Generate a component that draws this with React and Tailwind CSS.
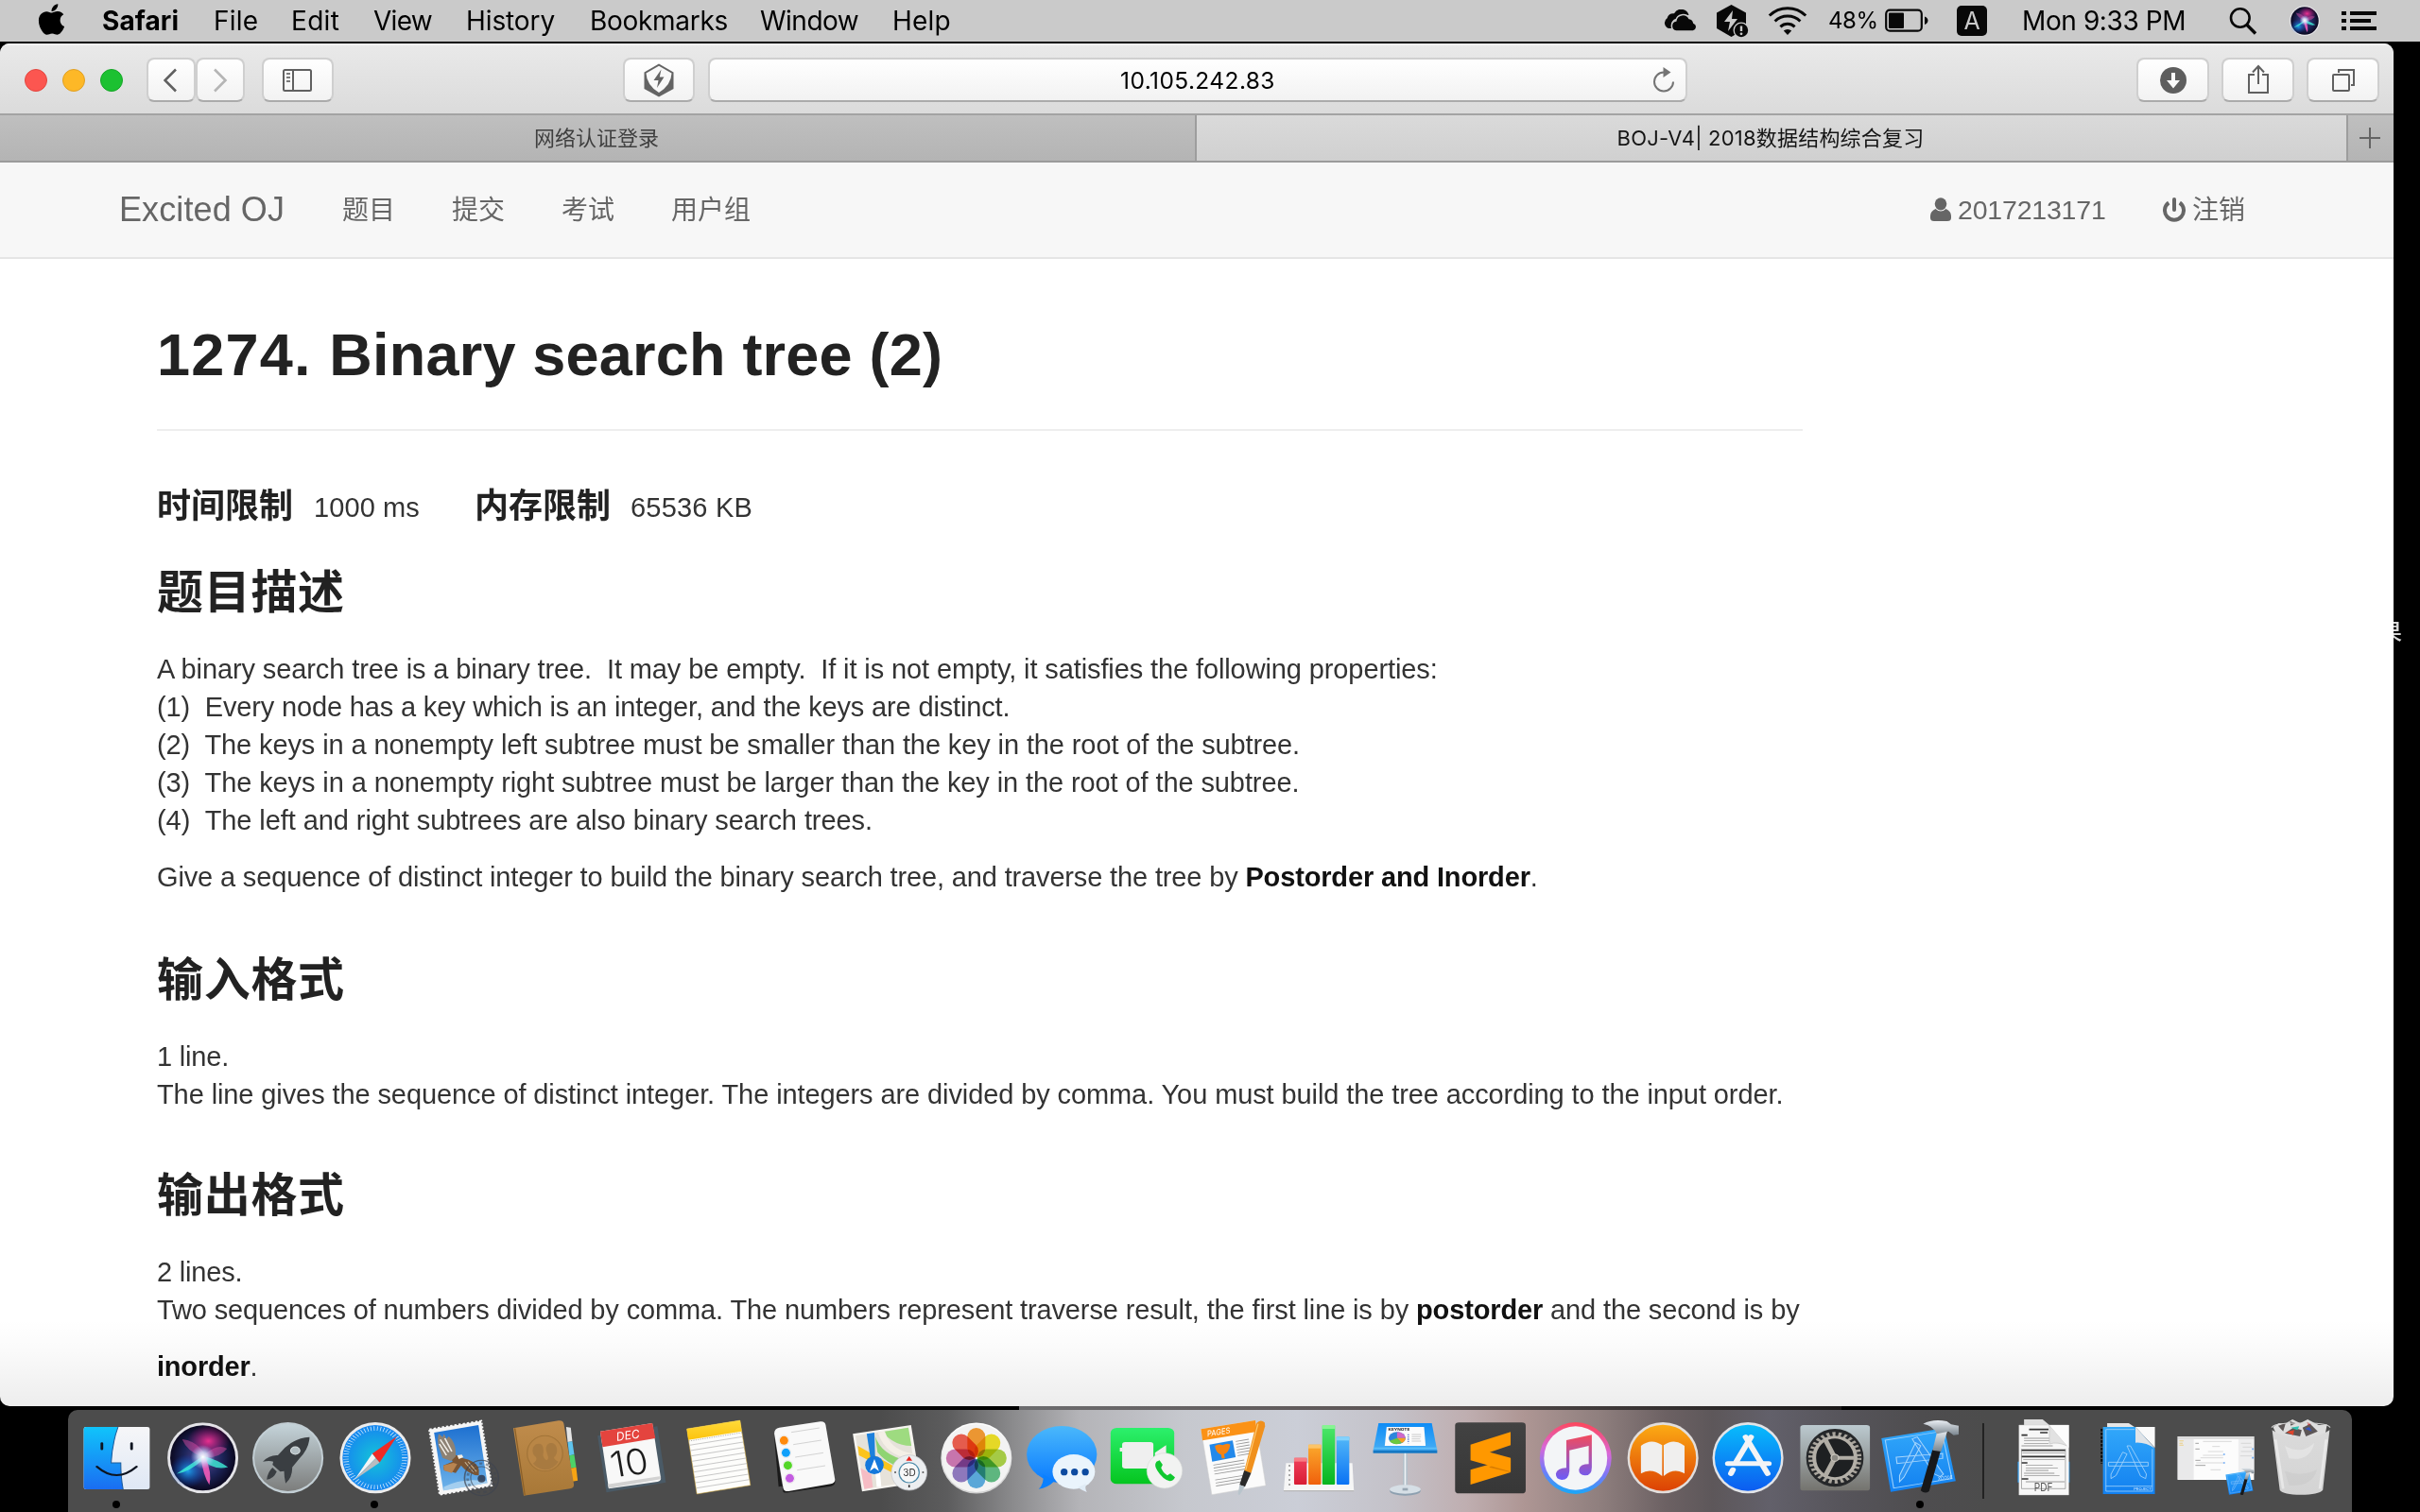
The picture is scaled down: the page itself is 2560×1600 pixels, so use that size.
import React from "react";
import { FaApple } from "react-icons/fa";

const UI = "font-['Inter','Noto_Sans_CJK_SC',sans-serif]";
const PAGE = "font-['Liberation_Sans','Noto_Sans_CJK_SC',sans-serif]";

/* ---------- menu bar ---------- */

const menus = [
  { label: "Safari", cls: "w-[118px] font-bold tracking-[0.1px]" },
  { label: "File", cls: "w-[82px] tracking-[0.2px]" },
  { label: "Edit", cls: "w-[87px] tracking-[0.3px]" },
  { label: "View", cls: "w-[98px] tracking-[-0.7px]" },
  { label: "History", cls: "w-[131px] tracking-[-0.1px]" },
  { label: "Bookmarks", cls: "w-[180px] tracking-[-0.3px]" },
  { label: "Window", cls: "w-[140px] tracking-[-0.5px]" },
  { label: "Help", cls: "w-[62px] tracking-[0.2px]" },
];

function SiriOrb({ id, className }) {
  return (
    <svg viewBox="0 0 76 76" className={className}>
      <defs>
        <radialGradient id={id + "bg"} cx="0.5" cy="0.5" r="0.5">
          <stop offset="0" stopColor="#5a4a9a" />
          <stop offset="0.6" stopColor="#1c2458" />
          <stop offset="1" stopColor="#0b0820" />
        </radialGradient>
        <radialGradient id={id + "pk"} cx="0.5" cy="0.5" r="0.5">
          <stop offset="0" stopColor="#e8308f" />
          <stop offset="1" stopColor="#b01070" stopOpacity="0" />
        </radialGradient>
        <radialGradient id={id + "bl"} cx="0.5" cy="0.5" r="0.5">
          <stop offset="0" stopColor="#1f9fe8" />
          <stop offset="1" stopColor="#0a40c0" stopOpacity="0" />
        </radialGradient>
        <radialGradient id={id + "wh"} cx="0.5" cy="0.5" r="0.5">
          <stop offset="0" stopColor="#fff" />
          <stop offset="0.4" stopColor="#d8e8ff" stopOpacity="0.8" />
          <stop offset="1" stopColor="#a0c0ff" stopOpacity="0" />
        </radialGradient>
      </defs>
      <circle cx="38" cy="38" r="38" fill="#e4e4e8" />
      <circle cx="38" cy="38" r="35" fill={"url(#" + id + "bg)"} />
      <ellipse cx="44" cy="20" rx="23" ry="17" fill={"url(#" + id + "pk)"} />
      <ellipse cx="22" cy="52" rx="20" ry="18" fill={"url(#" + id + "bl)"} />
      <path d="M37 37 Q20 30 16 18 Q32 20 40 34 Q54 22 64 28 Q56 38 40 38Z" fill="#e64fa8" opacity="0.45" />
      <path d="M38 36 Q26 44 10 55 Q24 53 38 40 Q50 52 65 48 Q54 40 38 36Z" fill="#3ff0d8" opacity="0.8" />
      <path d="M36 38 Q38 56 45 67 Q48 54 41 38Z" fill="#ff5fc0" opacity="0.85" />
      <circle cx="38" cy="37" r="13" fill={"url(#" + id + "wh)"} />
    </svg>
  );
}

function MenuBar() {
  return (
    <header className={"flex h-[44px] shrink-0 items-center bg-[#cacaca] text-[28px] leading-[44px] text-black " + UI}>
      <div className="flex w-[1760px] items-center">
        <FaApple className="ml-[36px] h-[37px] w-[37px] -translate-y-[2px]" />
        <nav className="ml-[35px] flex">
          {menus.map((m) => (
            <span key={m.label} className={m.cls}>{m.label}</span>
          ))}
        </nav>
      </div>
      <svg viewBox="0 0 36 24" className="h-[24px] w-[36px]">
        <path d="M8 20 H5.5 A6 6 0 0 1 3.6 9.2 A7 7 0 0 1 11 4.2 A8.4 8.4 0 0 1 26.5 6 Q18 4.5 14.5 9.6 Q9.5 10 8 15 Z" fill="#080808" />
        <path d="M13 23 A5.6 5.6 0 0 1 12.8 12 A7.6 7.6 0 0 1 27 9.6 A6 6 0 0 1 31.8 14.2 A4.6 4.6 0 0 1 31 23 Z" fill="#080808" stroke="#cacaca" strokeWidth="1.5" />
      </svg>
      <svg viewBox="0 0 35 36" className="ml-[19px] h-[36px] w-[35px]">
        <path d="M16.500 1 L32 9.500 V26 L16.500 35 L1 26 V9.500Z" fill="#080808" />
        <path d="M18 7 L9 19 H15 L13 29 L23 16 H17Z" fill="#cacaca" />
        <circle cx="27" cy="28" r="8.500" fill="#cacaca" />
        <circle cx="27" cy="28" r="7.200" fill="#080808" />
        <path d="M27 23.500 V29" stroke="#cacaca" strokeWidth="2.400" />
        <circle cx="27" cy="31.800" r="1.400" fill="#cacaca" />
      </svg>
      <svg viewBox="0 0 42 32" className="ml-[20px] h-[32px] w-[42px]" fill="none" stroke="#080808" strokeWidth="3">
        <path d="M1.800 10.500 A27.500 27.500 0 0 1 40.200 10.500" />
        <path d="M7.600 16.500 A19 19 0 0 1 34.400 16.500" />
        <path d="M13.400 22.300 A11 11 0 0 1 28.600 22.300" />
        <path d="M21 31 L16.800 26.600 A6 6 0 0 1 25.200 26.600Z" fill="#080808" stroke="none" />
      </svg>
      <span className="ml-[22px] w-[60px] text-[24px] tracking-[-0.4px]">48%</span>
      <svg viewBox="0 0 48 26" className="h-[26px] w-[48px]">
        <rect x="1.200" y="1.700" width="37.600" height="22" rx="4" fill="none" stroke="#080808" strokeWidth="2.200" />
        <rect x="4" y="4.500" width="16" height="16.500" rx="1" fill="#080808" />
        <path d="M42 8.500 Q45.500 10 45.500 12.700 Q45.500 15.500 42 17Z" fill="#080808" />
      </svg>
      <span className="ml-[28px] flex h-[32px] w-[32px] items-center justify-center rounded-[5px] bg-[#080808] text-[25px] leading-[32px] text-[#cacaca]">A</span>
      <span className="ml-[37px] w-[219px] tracking-[-0.4px]">Mon 9:33 PM</span>
      <svg viewBox="0 0 30 30" className="h-[30px] w-[30px]" fill="none" stroke="#080808">
        <circle cx="11.800" cy="12" r="9.800" strokeWidth="2.600" />
        <path d="M18.600 19 L28 28.500" strokeWidth="3.400" />
      </svg>
      <SiriOrb id="menuSiri" className="ml-[34px] h-[32px] w-[32px]" />
      <svg viewBox="0 0 37 22" className="ml-[23px] h-[22px] w-[37px]" fill="#080808">
        <path d="M0 1h5v4H0zM9 1h28v4H9zM0 9h5v4H0zM9 9h22v4H9zM0 17h5v4H0zM9 17h28v4H9z" />
      </svg>
    </header>
  );
}

/* ---------- browser chrome ---------- */

function ToolButton({ className = "", children }) {
  return (
    <div className={"flex h-[47px] items-center justify-center rounded-[8px] border-2 border-[#cfcfcf] border-b-[#ababab] bg-linear-to-b from-white to-[#f2f2f2] bg-clip-padding " + className}>
      {children}
    </div>
  );
}

function Toolbar() {
  return (
    <div className="flex h-[76px] items-start border-t-2 border-b-2 border-t-[#f4f4f4] border-b-[#a3a3a3] bg-linear-to-b from-[#e9e9e9] to-[#dbdbdb] pt-[13px]">
      <div className="ml-[26px] flex h-[47px] items-center gap-[16px]">
        <i className="h-[24px] w-[24px] rounded-full border border-[#e2463f] bg-[#fc5650]" />
        <i className="h-[24px] w-[24px] rounded-full border border-[#e0a023] bg-[#fdb827]" />
        <i className="h-[24px] w-[24px] rounded-full border border-[#14a626] bg-[#1cc131]" />
      </div>
      <ToolButton className="ml-[25px] w-[52px]">
        <svg viewBox="0 0 16 26" className="h-[26px] w-[16px]" fill="none" stroke="#606060" strokeWidth="2.600"><path d="M13 1.500 L1.500 13 L13 24.500" /></svg>
      </ToolButton>
      <ToolButton className="w-[52px]">
        <svg viewBox="0 0 16 26" className="h-[26px] w-[16px]" fill="none" stroke="#b5b5b5" strokeWidth="2.600"><path d="M2 1.500 L13.500 13 L2 24.500" /></svg>
      </ToolButton>
      <ToolButton className="ml-[18px] w-[76px]">
        <svg viewBox="0 0 32 26" className="h-[26px] w-[32px]" fill="none" stroke="#606060" strokeWidth="2">
          <rect x="1" y="2" width="29" height="22" rx="1.500" />
          <path d="M11 2 V24" />
          <path d="M4 6 H8 M4 10 H8 M4 14 H8" stroke="#7a7a7a" />
        </svg>
      </ToolButton>
      <ToolButton className="ml-[306px] w-[76px]">
        <svg viewBox="0 0 32 36" className="h-[36px] w-[32px]">
          <path d="M16 0.500 L31.500 9.500 V27 L16 35.500 L0.500 27 V9.500Z" fill="#636363" />
          <path d="M16 2.800 L29.500 10.500 Q29 23 16 31 Q3 23 2.500 10.500Z" fill="#f8f8f8" />
          <path d="M18.500 6.500 L10.500 18 H15.500 L14 26 L21.500 14.500 H16.800Z" fill="#636363" />
        </svg>
      </ToolButton>
      <ToolButton className="ml-[14px] w-[1036px]">
        <span className={"ml-[35px] grow text-center text-[24.5px] leading-[30px] tracking-[0.4px] text-black " + UI}>10.105.242.83</span>
        <svg viewBox="0 0 24 28" className="mr-[11px] h-[28px] w-[24px]">
          <path d="M12 5.500 A10 10 0 1 0 22 15.500" fill="none" stroke="#747474" strokeWidth="2" />
          <path d="M11.500 0 L19.500 5.500 L11.500 11Z" fill="#747474" />
        </svg>
      </ToolButton>
      <ToolButton className="ml-[475px] w-[77px]">
        <svg viewBox="0 0 28 28" className="h-[28px] w-[28px]">
          <circle cx="14" cy="14" r="14" fill="#5e5e5e" />
          <path d="M12 6 H16 V14 H21 L14 22.500 L7 14 H12Z" fill="#fafafa" />
        </svg>
      </ToolButton>
      <ToolButton className="ml-[13px] w-[77px]">
        <svg viewBox="0 0 24 32" className="h-[32px] w-[24px] -translate-y-[1px]" fill="none" stroke="#606060" strokeWidth="2">
          <path d="M8 11 H2 V30 H22 V11 H16" />
          <path d="M12 21 V3 M6 8.500 L12 2 L18 8.500" />
        </svg>
      </ToolButton>
      <ToolButton className="ml-[13px] w-[77px]">
        <svg viewBox="0 0 26 26" className="h-[26px] w-[26px]" fill="none" stroke="#606060" strokeWidth="2">
          <rect x="2" y="7" width="17" height="17" rx="1" />
          <path d="M8 5 V2 H24 V18 H21" />
        </svg>
      </ToolButton>
    </div>
  );
}

function TabBar() {
  return (
    <div className={"flex h-[50px] border-b-2 border-[#9b9b9b] text-[22px] leading-[48px] " + UI}>
      <div className="flex w-[1266px] justify-center border-r-2 border-[#9d9d9d] bg-linear-to-b from-[#bfbfbf] to-[#b4b4b4] text-[#3f3f3f]">
        <span className="-translate-x-[1px]">网络认证登录</span>
      </div>
      <div className="flex w-[1216px] justify-center bg-linear-to-b from-[#dadada] to-[#d0d0d0] text-[#141414]">
        <span className="-translate-x-[1px] tracking-[0.2px]">BOJ-V4| 2018数据结构综合复习</span>
      </div>
      <div className="flex w-[50px] items-center justify-center border-l-2 border-[#9d9d9d] bg-linear-to-b from-[#bfbfbf] to-[#b4b4b4]">
        <svg viewBox="0 0 22 22" className="h-[22px] w-[22px] -translate-x-[1px]" stroke="#646464" strokeWidth="2"><path d="M11 0 V22 M0 11 H22" /></svg>
      </div>
    </div>
  );
}

/* ---------- page ---------- */

function SiteNav() {
  return (
    <div className="flex h-[102px] items-center border-b-2 border-[#e5e5e5] bg-[#f7f7f7] text-[28px] leading-[40px] text-[#666]">
      <span className="ml-[126px] w-[236px] text-[36px] tracking-[0.1px]">Excited OJ</span>
      <nav className="flex translate-y-[1px] gap-[60px]">
        <span>题目</span>
        <span>提交</span>
        <span>考试</span>
        <span>用户组</span>
      </nav>
      <span className="ml-[1248px] flex w-[246px] items-center">
        <svg viewBox="0 0 22 26" className="mr-[7px] h-[26px] w-[22px]" fill="#666">
          <ellipse cx="11" cy="6.800" rx="6.300" ry="6.600" />
          <path d="M5.500 12 Q11 17 16.500 12 Q22 14.500 22 19.500 V21.500 Q22 25 18 25 H4 Q0 25 0 21.500 V19.500 Q0 14.500 5.500 12Z" />
        </svg>
        <span className="text-[28.5px] tracking-[-0.2px]">2017213171</span>
      </span>
      <span className="flex translate-y-[1px] items-center">
        <svg viewBox="0 0 24 26" className="mr-[7px] h-[26px] w-[24px] -translate-y-[1px]" fill="none" stroke="#666" strokeWidth="4">
          <path d="M6.200 5.500 A10 10 0 1 0 17.800 5.500" />
          <path d="M12 2 V13" strokeLinecap="round" />
        </svg>
        <span>注销</span>
      </span>
    </div>
  );
}

function Heading({ className = "", children }) {
  return <h2 className={"mb-[31px] text-[49px] leading-[60px] font-bold tracking-[0.700px] text-[#222] " + className}>{children}</h2>;
}

function Problem() {
  return (
    <main className="ml-[166px] flex w-[1741px] grow flex-col pt-[66px] text-[29px] leading-[40px] text-[#333]">
      <h1 className="h-[116px] border-b-2 border-[#eee] text-[63px] leading-[70px] font-bold tracking-[0.2px] text-[#222]">
        <span className="tracking-[1.200px]">1274. </span>Binary search tree (2)
      </h1>
      <div className="mt-[60px] flex h-[40px] items-baseline text-[29px]">
        <b className="w-[166px] text-[36px] text-[#222]">时间限制</b>
        <span className="w-[170px] -translate-y-[1px] tracking-[0.1px]">1000 ms</span>
        <b className="w-[165px] text-[36px] text-[#222]">内存限制</b>
        <span className="-translate-y-[1px] tracking-[0.2px]">65536 KB</span>
      </div>
      <Heading className="mt-[41px]">题目描述</Heading>
      <div className="whitespace-pre">
        <p className="tracking-[-0.11px]">{"A binary search tree is a binary tree.\u00a0 It may be empty.\u00a0 If it is not empty, it satisfies the following properties:"}</p>
        <p className="tracking-[-0.160px]">{"(1)\u00a0 Every node has a key which is an integer, and the keys are distinct."}</p>
        <p className="tracking-[-0.11px]">{"(2)\u00a0 The keys in a nonempty left subtree must be smaller than the key in the root of the subtree."}</p>
        <p className="tracking-[-0.1px]">{"(3)\u00a0 The keys in a nonempty right subtree must be larger than the key in the root of the subtree."}</p>
        <p className="tracking-[-0.08px]">{"(4)\u00a0 The left and right subtrees are also binary search trees."}</p>
        <p className="mt-[20px] tracking-[-0.15px]">
          {"Give a sequence of distinct integer to build the binary search tree, and traverse the tree by "}
          <b className="text-[#111]">Postorder and Inorder</b>.
        </p>
      </div>
      <Heading className="mt-[59px]">输入格式</Heading>
      <div className="whitespace-pre">
        <p className="tracking-[-0.2px]">1 line.</p>
        <p className="tracking-[-0.1px]">The line gives the sequence of distinct integer. The integers are divided by comma. You must build the tree according to the input order.</p>
      </div>
      <Heading className="mt-[57px]">输出格式</Heading>
      <div className="whitespace-pre">
        <p className="tracking-[-0.2px]">2 lines.</p>
        <p className="tracking-[-0.13px]">
          {"Two sequences of numbers divided by comma. The numbers represent traverse result, the first line is by "}
          <b className="text-[#111]">postorder</b>
          {" and the second is by"}
        </p>
        <p className="mt-[20px] tracking-[-0.2px]"><b className="text-[#111]">inorder</b>.</p>
      </div>
    </main>
  );
}

function BrowserWindow() {
  return (
    <section className={"relative mt-[2px] flex h-[1442px] w-[2532px] shrink-0 flex-col overflow-hidden rounded-[10px] bg-white bg-[linear-gradient(to_bottom,transparent_1350px,rgba(0,0,0,0.015)_1378px,rgba(0,0,0,0.07)_1442px)] " + PAGE}>
      <Toolbar />
      <TabBar />
      <SiteNav />
      <Problem />
    </section>
  );
}

/* ---------- dock ---------- */

const SLOT = 90.86;
const DOCK_X = 77.57;

/* Icon artwork is drawn in strips; each strip has its own origin and scale. */
function Strip({ x, k = 2.45, children }) {
  return <g transform={`translate(${x} 1480) scale(${1 / k} ${1 / 3})`}>{children}</g>;
}

function Defs() {
  const grads = {
    finder: ["#10c4fb", "#1a6df2"], face: ["#f6f6f8", "#dfe8f5"], rocket: ["#c4d3d9", "#7c7d7c"],
    sky: ["#1c6fd0", "#6fb4ea"], book: ["#c08c4c", "#a87837"], msg: ["#4ab8fb", "#0a7bff"], green: ["#2cf06c", "#05c51f"],
    red: ["#f0405c", "#d81c34"], orange: ["#fbaa2c", "#f0600c"], bar: ["#4ce86c", "#06b41e"], blue: ["#52b8f8", "#0a72f4"],
    keynote: ["#0d8cf6", "#47aef4"], subl: ["#424242", "#373737"], note: ["#f34a5c", "#6a5cf8"], books: ["#fcab14", "#dc4204"],
    store: ["#08bcfc", "#0c5cf0"], prefs: ["#bccad0", "#74736e"], xcode: ["#32a8fa", "#1280f0"], trash: ["#dadada", "#d4d4d4"], yellow: ["#ffda3a", "#fcc30e"],
    hammer: ["#e8edf2", "#7a858e"], disc: ["#ffffff", "#cfcfcf"],
  };
  return (
    <svg className="absolute h-0 w-0">
      <defs>
        {Object.entries(grads).map(([id, [a, b]]) => (
          <linearGradient key={id} id={id} x1="0" y1="0" x2="0" y2="1">
            <stop offset="0" stopColor={a} />
            <stop offset="1" stopColor={b} />
          </linearGradient>
        ))}
        <linearGradient id="ring" x1="0.6" y1="0" x2="0.5" y2="1">
          <stop offset="0" stopColor="#ff4658" />
          <stop offset="0.4" stopColor="#d868d8" />
          <stop offset="0.7" stopColor="#7a78f8" />
          <stop offset="1" stopColor="#18a8f8" />
        </linearGradient>
        <radialGradient id="dial">
          <stop offset="0" stopColor="#14c4d8" />
          <stop offset="1" stopColor="#1686f0" />
        </radialGradient>
      </defs>
    </svg>
  );
}

const Finder = () => (
  <Strip x={60}>
    <rect x="69" y="90" width="171" height="198" rx="6" fill="url(#face)" />
    <path d="M75 90 H158 Q143 140 140 204 H165 Q165 250 171 288 H75 Q69 288 69 282 V96 Q69 90 75 90Z" fill="url(#finder)" />
    <path d="M158 90 Q143 140 140 204 H165 Q165 250 171 288" fill="none" stroke="#1a5a9a" strokeWidth="2.500" />
    <path d="M116 142 V160 M193 142 V160" stroke="#0d1420" strokeWidth="7" strokeLinecap="round" />
    <path d="M103 216 Q154 270 206 216" fill="none" stroke="#0d1420" strokeWidth="6" strokeLinecap="round" />
  </Strip>
);

const Siri = () => (
  <svg x="177.500" y="1505" width="75" height="75.500" viewBox="0 0 76 76">
    <SiriOrb id="dockSiri" />
  </svg>
);

const Launchpad = () => (
  <Strip x={60}>
    <ellipse cx="600" cy="188" rx="92" ry="113" fill="#c2ced4" />
    <ellipse cx="600" cy="188" rx="87" ry="106" fill="url(#rocket)" />
    <path d="M656 122 Q620 124 592 156 L574 180 Q552 178 535 200 Q552 196 562 200 L560 210 L580 232 L590 230 Q590 250 594 269 Q612 250 611 218 L630 190 Q655 158 656 122Z" fill="#3a3e42" />
    <circle cx="619" cy="165" r="12" fill="#b2bdc2" stroke="#dbe2e4" strokeWidth="2.500" />
    <path d="M560 219 Q548 232 545 257 Q562 256 571 232Z" fill="#3a3e42" />
  </Strip>
);

const Safari = () => (
  <Strip x={60}>
    <ellipse cx="826" cy="188" rx="92" ry="113" fill="#ececec" />
    <ellipse cx="826" cy="188" rx="85" ry="104" fill="url(#dial)" />
    <ellipse cx="826" cy="188" rx="76" ry="93" fill="none" stroke="#e4f2ff" strokeWidth="14" strokeDasharray="1.800 6.600" />
    <path d="M882 120 L818 175 L837 203Z" fill="#f02a24" />
    <path d="M772 258 L818 175 L827 189Z" fill="#f4f4f4" />
    <path d="M772 258 L837 203 L827 189Z" fill="#b9bcc0" />
  </Strip>
);

const Mail = () => (
  <Strip x={60}>
    <path d="M966 98 L1100 71 L1127 276 L993 305Z" fill="#f6f6f6" stroke="#f6f6f6" strokeWidth="6" strokeDasharray="6 5" />
    <path d="M978 108 L1093 84 L1116 268 L1002 292Z" fill="url(#sky)" />
    <path d="M1004 280 Q1050 250 1114 262 L1116 268 L1002 292Z" fill="#bcdcf2" opacity="0.7" />
    <path d="M1020 182 Q1032 176 1042 182 L1054 190 Q1080 196 1092 216 Q1096 228 1094 244 Q1068 242 1048 212 L1034 236 L1022 232 L1004 228 L1002 212 L1026 200Z" fill="#7a5534" />
    <path d="M990 112 Q984 140 994 168 L1000 188 L1022 198 L1034 184 Q1036 140 1016 120 L1010 128 L1004 112 L1000 122Z" fill="#8d8274" />
    <path d="M994 130 L1016 170 M992 144 L1010 180 M1006 126 L1024 168" stroke="#efece6" strokeWidth="4" />
    <path d="M1038 180 L1050 178 L1054 186 L1042 192Z" fill="#f4efe4" />
    <path d="M1028 204 L1002 212 L1004 228 L1024 236 L1038 208Z" fill="#b98450" />
    <path d="M1058 202 L1080 234 M1066 200 L1088 232" stroke="#c9b79c" strokeWidth="2.500" />
    <ellipse cx="1101" cy="252" rx="44" ry="56" fill="none" stroke="#3e4450" strokeWidth="4" opacity="0.7" />
    <ellipse cx="1101" cy="252" rx="36" ry="46" fill="none" stroke="#3e4450" strokeWidth="7" strokeDasharray="8 9" opacity="0.5" />
    <ellipse cx="1101" cy="252" rx="28" ry="36" fill="none" stroke="#3e4450" strokeWidth="3" opacity="0.6" />
    <ellipse cx="1101" cy="254" rx="10" ry="12" fill="#2f3a50" opacity="0.85" />
  </Strip>
);

const Contacts = () => (
  <Strip x={60}>
    <path d="M1320 90 L1332 92 L1336 136 L1324 138Z" fill="#e4e4e4" />
    <path d="M1324 138 L1336 136 L1341 178 L1328 181Z" fill="#5ec4ee" />
    <path d="M1328 181 L1341 178 L1346 218 L1332 221Z" fill="#4cd268" />
    <path d="M1332 221 L1346 218 L1350 260 L1336 263Z" fill="#f6a414" />
    <path d="M1183 94 L1300 70 Q1312 68 1314 80 L1340 272 Q1341 284 1330 286 L1210 308Z" fill="url(#book)" />
    <path d="M1187 94 L1213 306" stroke="#8a5f28" strokeWidth="3" />
    <ellipse cx="1265" cy="174" rx="46" ry="56" fill="#b98646" stroke="#a27438" strokeWidth="3" />
    <path d="M1234 206 Q1246 196 1242 186 Q1230 176 1234 156 Q1240 140 1254 144 Q1264 150 1260 180 Q1262 192 1270 196 Q1276 190 1272 180 Q1262 150 1276 142 Q1292 138 1296 158 Q1298 178 1288 186 Q1290 196 1300 200 Q1288 224 1266 226 Q1246 224 1234 206Z" fill="#a87a40" />
  </Strip>
);

const Calendar = () => (
  <Strip x={620}>
    <path d="M29 118 L184 88 L206 266 L52 298Z" fill="#4a5a66" />
    <path d="M36 104 L171 78 L193 252 Q194 262 184 264 L58 286Z" fill="#f8f8f8" />
    <path d="M55 272 L193 246 L193 256 L58 284Z" fill="#d2d2d2" />
    <path d="M36 104 L171 78 L179 126 L42 154Z" fill="#e4443e" />
    <text transform="translate(78 135) skewY(-10)" fontFamily="Inter" fontSize="38" textLength="60" lengthAdjust="spacingAndGlyphs" fill="#fff">DEC</text>
    <text transform="translate(68 250) rotate(-8)" fontFamily="Inter" fontWeight="300" fontSize="112" textLength="98" lengthAdjust="spacingAndGlyphs" fill="#1c1c1c">10</text>
  </Strip>
);

const Notes = () => (
  <Strip x={620}>
    <path d="M260 96 L398 69 L425 275 L286 303Z" fill="#fdfdfb" stroke="#c9a030" strokeWidth="1.500" />
    <path d="M260 96 L398 69 L402 104 L264 131Z" fill="url(#yellow)" />
    {[0, 1, 2, 3, 4, 5, 6, 7, 8].map((i) => (
      <path key={i} d={`M${267 + i * 2.3} ${148 + i * 17} L${404 + i * 2.3} ${121 + i * 17}`} stroke="#b4b4b4" strokeWidth="2" />
    ))}
    <path d="M265 135 L403 108" stroke="#999" strokeWidth="2" strokeDasharray="3 3" />
  </Strip>
);

const Reminders = () => (
  <Strip x={620}>
    <path d="M488 112 L512 296 Q514 300 526 298 L636 278 Q648 274 646 262 L640 250 L500 280Z" fill="#1a1a1a" />
    <path d="M502 92 L608 73 Q620 71 622 84 L646 256 Q647 268 635 271 L526 294 Q514 296 512 284 L489 112 Q488 95 502 92Z" fill="#f9f9f9" />
    {[["#ff8a0c", 514, 133], ["#10a0fa", 519, 172], ["#54d628", 524, 212], ["#c35ce0", 529, 253]].map(([c, x, y]) => (
      <g key={c}>
        <ellipse cx={x} cy={y} rx="13" ry="16" fill="#fff" stroke="#ccc" strokeWidth="1" />
        <ellipse cx={x} cy={y} rx="11" ry="13.500" fill={c} />
        <path d={`M${x + 19} ${y - 26} L${x + 92} ${y - 40}`} stroke="#c4c4c4" strokeWidth="2" />
      </g>
    ))}
  </Strip>
);

const Maps = () => (
  <Strip x={620}>
    <path d="M692 112 L843 84 L867 266 L716 295Z" fill="#f6f4f0" />
    <path d="M699 118 L836 92 L858 260 L722 287Z" fill="#e6e2da" />
    <path d="M768 106 L836 92 L844 150 Q800 150 768 106Z" fill="#9edb80" />
    <path d="M750 120 Q770 190 854 200 L850 226 Q790 220 756 170Z" fill="#8fd472" />
    <path d="M766 106 Q784 176 852 184" fill="none" stroke="#f4efe6" strokeWidth="18" />
    <path d="M705 150 L800 216 L796 236 L708 180Z" fill="#fcc41c" />
    <path d="M728 112 L748 108 L750 190 L738 190Z" fill="#1c80dc" />
    <path d="M712 220 L740 240 L744 282 L722 287Z" fill="#f6bcc4" />
    <path d="M754 200 L760 280" stroke="#fff" strokeWidth="12" />
    <ellipse cx="748" cy="211" rx="24" ry="29" fill="#1478dc" />
    <path d="M748 192 L760 230 L748 220 L736 230Z" fill="#fff" />
    <ellipse cx="838" cy="235" rx="46" ry="56" fill="#eceef0" stroke="#c4c8cc" strokeWidth="2" />
    <ellipse cx="838" cy="235" rx="26" ry="32" fill="#f7f8f8" stroke="#4a88a8" strokeWidth="3" />
    <path d="M838 183 L846 197 H830Z" fill="#e8201c" />
    <path d="M838 274 V282 M800 234 H804 M872 234 H876" stroke="#333" strokeWidth="4" />
    <text x="822" y="246" fontFamily="Inter" fontSize="32" textLength="33" lengthAdjust="spacingAndGlyphs" fill="#333">3D</text>
  </Strip>
);

const petals = ["#f7941d", "#f0e010", "#a4d035", "#52b878", "#4ca6e0", "#8a70c0", "#cc6cae", "#f04e3e"];
const Photos = () => (
  <g transform="translate(1033 1543)">
    <circle r="37.500" fill="url(#disc)" />
    <circle r="36" fill="#f3f3f3" />
    {petals.map((c, i) => (
      <rect key={c} x="-9.500" y="-32" width="19" height="31" rx="9.500" fill={c} opacity="0.9" transform={`rotate(${i * 45})`} className="mix-blend-multiply" />
    ))}
  </g>
);

const Messages = () => (
  <Strip x={620}>
    <ellipse cx="1233" cy="177" rx="91" ry="90" fill="url(#msg)" />
    <path d="M1184 240 Q1188 270 1173 287 Q1196 284 1214 262Z" fill="#0a80ff" />
    <ellipse cx="1264" cy="232" rx="55" ry="55" fill="#eaf4fc" />
    <path d="M1274 282 Q1284 290 1298 297 Q1292 284 1296 270Z" fill="#e0ecf6" />
    <ellipse cx="1239" cy="233" rx="9" ry="11" fill="#0c4aa0" />
    <ellipse cx="1266" cy="233" rx="9" ry="11" fill="#0c4aa0" />
    <ellipse cx="1294" cy="233" rx="9" ry="11" fill="#0c4aa0" />
  </Strip>
);

const FaceTime = () => (
  <Strip x={620}>
    <rect x="1359" y="93" width="165" height="178" rx="16" fill="url(#green)" />
    <rect x="1389" y="138" width="81" height="84" rx="8" fill="#efefef" />
    <path d="M1383 156 h6 v12 h-6z M1474 172 L1503 148 V190 H1474Z" fill="#efefef" />
    <ellipse cx="1499" cy="229" rx="46" ry="56" fill="#f2f3f2" stroke="#d4d8d4" strokeWidth="1.500" />
    <path d="M1478 200 Q1471 212 1480 228 Q1494 256 1512 262 Q1522 262 1526 250 L1514 238 L1506 244 Q1494 234 1490 220 L1494 210 L1486 196Z" fill="#10c830" />
  </Strip>
);

const Pages = () => (
  <Strip x={1240}>
    <path d="M74 97 L215 69 L242 276 L102 305Z" fill="#fbfbfb" stroke="#d0d0d0" strokeWidth="1.500" />
    <path d="M74 97 L215 69 L219 105 L78 133Z" fill="#fb9216" />
    <text transform="translate(90 121) skewY(-11)" fontFamily="Inter" fontSize="26" textLength="60" lengthAdjust="spacingAndGlyphs" fill="#fff">PAGES</text>
    <path d="M96 146 L156 133 L164 186 L103 200Z" fill="#2389ea" />
    <path d="M110 150 Q120 142 130 148 Q142 140 150 146 Q146 172 134 176 L136 190 H128 L126 178 Q112 172 110 150Z" fill="#f58412" />
    {[0, 1, 2, 3, 4, 5].map((i) => (
      <path key={"r" + i} d={`M${164 + i} ${136 + i * 9} L${198 + i} ${129 + i * 9}`} stroke="#999" strokeWidth="2.500" />
    ))}
    {[0, 1, 2, 3, 5, 6, 7].map((i) => (
      <path key={"f" + i} d={`M${106 + i} ${211 + i * 9.5} L${186 + i} ${195 + i * 9.5}`} stroke="#999" strokeWidth="2.500" />
    ))}
    <path d="M218 78 Q228 64 239 76 L240 88 L204 236 L186 230Z" fill="#f0901c" />
    <path d="M222 80 L190 226" stroke="#ffc870" strokeWidth="3" />
    <path d="M186 228 L204 236 L188 280 L174 274Z" fill="#2a2a2a" />
    <path d="M174 274 L188 280 L174 306 L170 304Z" fill="#b8c4cc" />
  </Strip>
);

const Numbers = () => (
  <Strip x={1240}>
    <path d="M294 205 H466 L470 293 H288Z" fill="#f6f6f6" />
    <path d="M288 291 H470 V295 H288Z" fill="#b8b8b8" />
    <path d="M303 210 V282" stroke="#999" strokeWidth="4" strokeDasharray="6 9" />
    <rect x="315" y="188" width="33" height="85" rx="3" fill="url(#red)" />
    <rect x="315" y="188" width="33" height="12" fill="#f87c84" />
    <rect x="352" y="146" width="33" height="127" rx="3" fill="url(#orange)" />
    <rect x="352" y="146" width="33" height="12" fill="#fcc468" />
    <rect x="388" y="84" width="33" height="189" rx="3" fill="url(#bar)" />
    <rect x="388" y="84" width="33" height="12" fill="#86f492" />
    <rect x="425" y="121" width="33" height="152" rx="3" fill="url(#blue)" />
    <rect x="425" y="121" width="33" height="12" fill="#84d2fc" />
  </Strip>
);

const Keynote = () => (
  <Strip x={1240}>
    <rect x="599" y="170" width="12" height="120" fill="#b4c0ca" />
    <rect x="603" y="170" width="4" height="120" fill="#eef2f5" />
    <ellipse cx="605" cy="293" rx="40" ry="15" fill="#8da0b0" />
    <ellipse cx="605" cy="288" rx="40" ry="14" fill="#d6dfe6" />
    <path d="M598 284 h14 v8 h-14z" fill="#98a6b2" />
    <path d="M536 78 H674 L688 166 H522Z" fill="url(#keynote)" />
    <path d="M522 164 H688 V173 H522Z" fill="#1478c4" />
    <path d="M523 155 H687 L688 160 H522Z" fill="#5cc0fa" />
    <path d="M557 90 H654 L658 150 H552Z" fill="#fbfbfb" />
    <text x="561" y="102" fontFamily="Inter" fontWeight="700" fontSize="12" textLength="56" lengthAdjust="spacingAndGlyphs" fill="#222">KEYNOTE</text>
    <ellipse cx="584" cy="125" rx="22" ry="19" fill="#2c86dc" />
    <path d="M584 125 V106 A22 19 0 0 1 606 125Z" fill="#d068c8" />
    <path d="M584 125 H606 A22 19 0 0 1 596 141Z" fill="#f8a020" />
    <path d="M584 125 L596 141 A22 19 0 0 1 564 134Z" fill="#6cc83c" />
    <path d="M613 113 V142" stroke="#6a86d0" strokeWidth="4" strokeDasharray="4 3" />
    <path d="M622 114 H646 M622 121 H646 M622 128 H644 M622 135 H646" stroke="#bbb" strokeWidth="2" />
  </Strip>
);

const Sublime = () => (
  <Strip x={1240}>
    <rect x="734" y="76" width="183" height="225" rx="10" fill="url(#subl)" />
    <path d="M774 226 L878 190 V234 L774 273Z" fill="#ff9800" />
    <path d="M878 190 V234 L822 218 L842 204Z" fill="#d87c00" />
    <path d="M774 146 L878 106 V148 L824 170 L878 188 V232 L774 196Z" fill="#ff9800" />
  </Strip>
);

const ITunes = () => (
  <Strip x={1240}>
    <ellipse cx="1046" cy="189" rx="93" ry="114" fill="url(#ring)" />
    <ellipse cx="1046" cy="189" rx="82" ry="101" fill="#f3f5f7" />
    <path d="M1022 132 L1088 115 V218 Q1088 244 1070 244 Q1053 242 1055 224 Q1058 208 1080 208 V150 L1030 164 V230 Q1028 258 1010 258 Q994 256 995 238 Q998 222 1022 220Z" fill="url(#note)" />
  </Strip>
);

const Books = () => (
  <Strip x={1240}>
    <ellipse cx="1272" cy="188" rx="92" ry="113" fill="#e2dedc" />
    <ellipse cx="1272" cy="188" rx="86" ry="105" fill="url(#books)" />
    <path d="M1215 150 Q1242 124 1270 148 V246 Q1242 218 1215 238Z" fill="#f0efee" />
    <path d="M1328 150 Q1301 124 1274 148 V246 Q1301 218 1328 238Z" fill="#f0efee" />
  </Strip>
);

const AppStore = () => (
  <Strip x={1240}>
    <ellipse cx="1492" cy="188" rx="92" ry="113" fill="#e2e4e8" />
    <ellipse cx="1492" cy="188" rx="86" ry="105" fill="url(#store)" />
    <g stroke="#f2f4f6" strokeWidth="15" strokeLinecap="round" fill="none">
      <path d="M1500 122 L1462 200" />
      <path d="M1486 122 L1543 238" />
      <path d="M1440 206 H1546" />
      <path d="M1453 226 L1448 238" />
    </g>
  </Strip>
);

const Prefs = () => (
  <Strip x={1860} k={2.24}>
    <rect x="99" y="84" width="165" height="208" rx="8" fill="url(#prefs)" />
    <ellipse cx="181" cy="188" rx="68" ry="92" fill="#26282a" />
    <ellipse cx="181" cy="188" rx="56" ry="75" fill="none" stroke="#a8a49c" strokeWidth="14" strokeDasharray="7 6.800" />
    <ellipse cx="181" cy="188" rx="49" ry="66" fill="#1e2022" stroke="#b4b0a8" strokeWidth="9" />
    <path d="M181 188 H228 M181 188 L158 130 M181 188 L158 246" stroke="#b0aca4" strokeWidth="12" />
    <ellipse cx="181" cy="188" rx="9" ry="11" fill="#8c8a84" stroke="#d0ccc4" strokeWidth="3" />
  </Strip>
);

function HammerSheet() {
  return (
    <g>
      <path d="M291 126 L440 94 L467 262 L313 296Z" fill="url(#xcode)" />
      <path d="M300 132 L434 104 L458 254 L320 284Z" fill="none" stroke="#9cd0fb" strokeWidth="2.500" />
      <path d="M364 128 L376 122 L438 240 L430 248 L414 238Z M372 140 L384 150 L344 250 L334 264 L334 244Z M326 186 L436 174 V190 L328 206Z" fill="#2f96f4" stroke="#a6d6fc" strokeWidth="2.500" />
      <path d="M412 162 L432 162 L404 294 Q394 304 384 292Z" fill="#17181a" />
      <path d="M424 100 L448 100 L432 168 L412 164Z" fill="url(#hammer)" />
      <path d="M390 80 Q412 64 446 72 L456 82 L474 86 L474 114 L462 116 L450 104 L422 112 Q414 86 390 80Z" fill="url(#hammer)" />
    </g>
  );
}

const Xcode = () => (
  <Strip x={1860} k={2.24}>
    <HammerSheet />
    <text transform="translate(425 260) skewY(-10)" fontFamily="Inter" fontSize="15" textLength="34" lengthAdjust="spacingAndGlyphs" fill="#cfe8ff">XCODE</text>
  </Strip>
);

const apps = [Finder, Siri, Launchpad, Safari, Mail, Contacts, Calendar, Notes, Reminders, Maps, Photos, Messages, FaceTime, Pages, Numbers, Keynote, Sublime, ITunes, Books, AppStore, Prefs, Xcode];
const running = [0, 3, 21];

function PdfStack() {
  return (
    <svg viewBox="2118 1492 91 108" className="h-[108px] w-[91px]">
      <Strip x={1860} k={2.24}>
        <path d="M617 200 H740 V266 H617Z" fill="#2a98ec" />
        <path d="M632 66 H676 L692 84 H632Z" fill="#dedede" />
        <path d="M620 84 H738 V306 H620Z" fill="#f7f7f7" stroke="#ccc" strokeWidth="1" />
        <path d="M644 98 H690 M670 108 H688 M626 116 H640 M626 164 H730 M626 184 H730 M626 204 H640 M626 255 H642" stroke="#333" strokeWidth="5" />
        <path d="M632 126 H700 M632 134 H696 M632 142 H690 M626 150 H700 M628 172 H728 M630 193 H728 M636 212 H700 M636 220 H712 M636 228 H690 M632 237 H704 M632 245 H716 M636 264 H728" stroke="#999" strokeWidth="2.500" />
        <path d="M626 160 V286 H730 V160" fill="none" stroke="#777" strokeWidth="1.500" />
        <path d="M692 84 L734 150 Q712 136 692 144Z" fill="#e2e2e2" stroke="#bbb" strokeWidth="1.500" />
        <path d="M692 84 H738 V156Z" fill="#fdfdfd" />
        <text x="656" y="294" fontFamily="Inter" fontSize="34" textLength="44" lengthAdjust="spacingAndGlyphs" fill="#555">PDF</text>
      </Strip>
    </svg>
  );
}

function ProjectStack() {
  return (
    <svg viewBox="2209 1492 91 108" className="h-[108px] w-[91px]">
      <Strip x={1860} k={2.24}>
        <path d="M816 96 V206" stroke="#0c0c0c" strokeWidth="5" strokeDasharray="8 4" />
        <path d="M829 78 H880 L896 92 H829Z" fill="#e6e6e6" />
        <path d="M819 90 H896 L942 158 V303 H819Z" fill="url(#xcode)" />
        <path d="M826 98 H894 M936 160 V294 H826 V98 M826 278 H936" fill="none" stroke="#a4d4fb" strokeWidth="2" />
        <path d="M876 150 L884 150 L922 240 L920 254 L908 246Z M866 170 L876 176 L850 244 L838 254 L838 240Z M832 202 H926 V214 H832Z" fill="none" stroke="#a4d4fb" strokeWidth="2.200" />
        <path d="M896 90 L942 158 Q920 138 896 140Z" fill="#e0e4e8" />
        <path d="M896 90 H942 V156Z" fill="#fafafa" />
        <text x="892" y="291" fontFamily="Inter" fontSize="12" textLength="42" lengthAdjust="spacingAndGlyphs" fill="#d8ecff">PROJECT</text>
      </Strip>
    </svg>
  );
}

function MiniWindow() {
  return (
    <svg viewBox="2300 1492 92 108" className="h-[108px] w-[92px]">
      <Strip x={1860} k={2.24}>
        <rect x="996" y="120" width="181" height="138" fill="#fcfcfc" />
        <rect x="996" y="120" width="181" height="9" fill="#dcdcdc" />
        <rect x="996" y="129" width="38" height="128" fill="#e9e9ea" />
        <rect x="1140" y="129" width="37" height="110" fill="#eeeeef" />
        <path d="M1000 134 H1010 M1000 142 H1008 M1000 148 H1010" stroke="#ecd088" strokeWidth="3" />
        <path d="M1056 136 H1124 M1078 152 H1096 M1068 168 H1104 M1056 180 H1104 M1050 188 H1104 M1040 204 H1104 M1074 226 H1098 M1146 142 H1170 M1150 154 H1172 M1146 168 H1174 M1144 182 H1172" stroke="#d0d0d0" strokeWidth="2" />
        <path d="M1038 142 H1046 M1038 160 H1048 M1038 196 H1050 M1038 212 H1062" stroke="#888" strokeWidth="2" />
        <path d="M1104 177 h4 M1104 204 h4 M1172 160 h4 M1172 188 h4" stroke="#6aa8f4" strokeWidth="5" />
        <g transform="translate(1002 194) scale(0.370 0.375)"><HammerSheet /></g>
      </Strip>
    </svg>
  );
}

function Trash() {
  return (
    <svg viewBox="2392 1492 88 108" className="h-[108px] w-[88px]">
      <Strip x={1860} k={2.24}>
        <path d="M1222 90 L1236 78 L1250 80 L1268 66 L1286 78 L1304 66 L1330 84 L1350 82 L1344 126 H1234Z" fill="#dedede" />
        <path d="M1234 86 L1252 78 L1246 104Z M1262 72 L1276 78 L1264 86Z M1292 92 L1310 80 L1328 104 L1300 120Z M1250 110 L1270 92 L1290 100 L1286 120Z" fill="#5c5656" />
        <path d="M1264 92 L1284 88 L1280 100Z" fill="#30c0b0" />
        <path d="M1298 96 L1308 90 L1314 104Z" fill="#3454c4" />
        <path d="M1302 74 L1312 80 L1306 86Z" fill="#c03838" />
        <path d="M1254 106 L1272 100 L1270 116Z" fill="#e0442c" />
        <path d="M1220 100 Q1240 122 1288 121 Q1336 122 1356 100 L1340 290 Q1330 305 1288 305 Q1246 305 1238 290Z" fill="url(#trash)" />
        <path d="M1219 92 Q1222 76 1288 78 Q1354 76 1357 92" fill="none" stroke="#d8d8d8" strokeWidth="3" />
        <path d="M1228 130 L1246 286 M1348 130 L1333 286" stroke="#f0f0f0" strokeWidth="6" opacity="0.700" />
        <path d="M1250 150 Q1290 180 1320 140 Q1310 200 1260 190Z" fill="#e8e8e8" opacity="0.700" />
        <path d="M1250 230 Q1290 250 1326 226 Q1316 280 1260 276Z" fill="#c8c8c8" opacity="0.500" />
      </Strip>
    </svg>
  );
}

function Dock() {
  return (
    <footer className="relative mt-[4px] ml-[72px] flex h-[108px] w-[2416px] shrink-0 rounded-t-[10px] bg-[linear-gradient(to_right,#4c4c4c_0px,#4c4c4c_860px,#5c5c5d_930px,#8b8b8d_1000px,#b4b4b8_1070px,#c6c8ce_1180px,#cbced7_1300px,#c4c2c9_1400px,#bfaeb0_1480px,#ae9694_1540px,#8f7f7e_1620px,#6c6163_1690px,#5d575a_1740px,#62606a_1800px,#56545a_1880px,#4e4d4f_1960px,#4c4c4c_2030px,#4c4c4c_2416px)] pl-[5.570px]">
      <Defs />
      <div className="flex w-[1998.920px] shrink-0">
        {apps.map((Icon, i) => (
          <div key={i} className="relative flex-1">
            <svg viewBox={`${DOCK_X + SLOT * i} 1492 ${SLOT} 108`} className="h-[108px] w-full overflow-visible">
              <Icon />
            </svg>
            {running.includes(i) && <i className="absolute bottom-[4px] left-1/2 h-[8px] w-[8px] -translate-x-1/2 rounded-full bg-black" />}
          </div>
        ))}
      </div>
      <i className="mt-[14px] ml-[21px] h-[80px] w-[2px] shrink-0 bg-[#222]" />
      <div className="ml-[18px] flex">
        <PdfStack />
        <ProjectStack />
        <MiniWindow />
        <Trash />
      </div>
    </footer>
  );
}

export default function App() {
  return (
    <div className="relative flex h-[1600px] w-[2560px] flex-col overflow-hidden bg-black">
      <span className="absolute top-[651px] left-[2517px] font-['Noto_Sans_CJK_SC',sans-serif] text-[24px] leading-[32px] font-medium text-[#d8d8d8]">果</span>
      <MenuBar />
      <BrowserWindow />
      <div className="absolute top-[1488px] left-[1078px] h-[4px] w-[870px] bg-linear-to-r from-[#6c6c6e] via-[#5a5252] to-[#1a1818]" />
      <Dock />
    </div>
  );
}
